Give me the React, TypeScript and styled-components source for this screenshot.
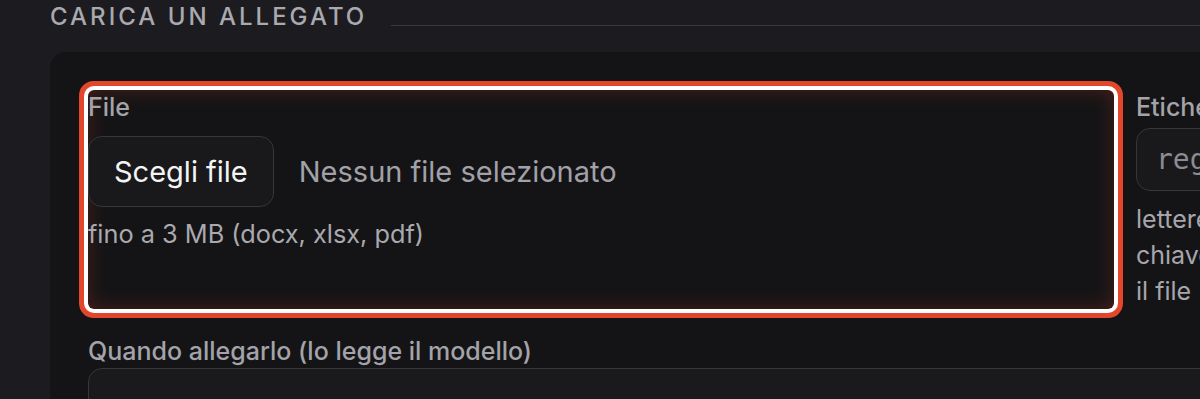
import React from "react";
import styled, { createGlobalStyle } from "styled-components";

const GlobalStyle = createGlobalStyle`
  html, body {
    margin: 0;
    padding: 0;
    background: #1c1c20;
    overflow: hidden;
  }
  body {
    font-family: Inter, "Noto Sans", sans-serif;
    color: #a6a6ac;
  }
`;

const Page = styled.div`
  width: 1200px;
  height: 399px;
  overflow: hidden;
  padding: 2px 0 0 50px;
  box-sizing: border-box;
`;

const SectionHeader = styled.div`
  display: flex;
  align-items: flex-start;
  height: 30px;
  width: 1600px;
`;

const Title = styled.h2`
  margin: 0;
  font-size: 24px;
  line-height: 30px;
  font-weight: 500;
  letter-spacing: 3px;
  color: #a9a9af;
  text-transform: uppercase;
  white-space: nowrap;
`;

const Rule = styled.div`
  flex: 1;
  height: 1px;
  margin: 23px 0 0 24px;
  background: #38383d;
`;

const Card = styled.section`
  margin-top: 20px;
  width: 1600px;
  background: #141416;
  border-radius: 16px;
  padding: 38px 0 40px 38px;
  box-sizing: border-box;
  display: flex;
  flex-direction: column;
  gap: 25px;
`;

const Grid = styled.div`
  display: grid;
  grid-template-columns: 1026px 460px;
  column-gap: 22px;
  align-items: stretch;
`;

const Field = styled.div<{ $highlight?: boolean }>`
  display: flex;
  flex-direction: column;
  border-radius: 6px;
  ${(p) =>
    p.$highlight &&
    `
    box-shadow: 0 0 0 4px #ffffff, 0 0 0 9px #e2462b, inset 0 0 20px rgba(200, 60, 40, 0.3);
  `}
`;

const Label = styled.label`
  font-size: 25px;
  line-height: 34px;
  font-weight: 500;
  color: #a3a3a9;
  white-space: nowrap;
`;

const FileRow = styled.div`
  display: flex;
  align-items: center;
  gap: 25px;
  margin-top: 12px;
`;

const FileButton = styled.button`
  height: 71px;
  padding: 0 25px;
  border: 1px solid #36363b;
  border-radius: 14px;
  background: #19191c;
  color: #f4f4f5;
  font-family: Inter, sans-serif;
  font-size: 29px;
  font-weight: 400;
`;

const FileName = styled.span`
  font-size: 29px;
  color: #a1a1a7;
`;

const Hint = styled.div`
  margin-top: 9px;
  font-size: 25.3px;
  line-height: 36px;
  color: #a9a9ae;
`;

const TextInput = styled.div`
  margin-top: 4px;
  height: 63px;
  box-sizing: border-box;
  border: 1px solid #36363b;
  border-radius: 14px;
  background: #19191c;
  padding: 0 19px;
  display: flex;
  align-items: center;
  font-family: "DejaVu Sans Mono", "Liberation Mono", monospace;
  font-size: 28px;
  color: #8c8c92;
  white-space: nowrap;
`;

const Help = styled.div`
  margin-top: 10px;
  font-size: 25px;
  line-height: 36px;
  color: #a6a6ac;
  white-space: nowrap;
`;

const TextArea = styled.div`
  height: 90px;
  border: 1px solid #36363b;
  border-radius: 14px;
  background: #1a1a1d;
`;

export default function App() {
  return (
    <>
      <GlobalStyle />
      <Page>
        <SectionHeader>
          <Title>Carica un allegato</Title>
          <Rule />
        </SectionHeader>
        <Card>
          <Grid>
            <Field $highlight>
              <Label>File</Label>
              <FileRow>
                <FileButton>Scegli file</FileButton>
                <FileName>Nessun file selezionato</FileName>
              </FileRow>
              <Hint>fino a 3 MB (docx, xlsx, pdf)</Hint>
            </Field>
            <Field>
              <Label>Etichetta</Label>
              <TextInput>regolamento</TextInput>
              <Help>
                lettere minuscole, numeri e trattini: è la
                <br />
                chiave con cui il modello ritrova
                <br />
                il file
              </Help>
            </Field>
          </Grid>
          <Field>
            <Label>Quando allegarlo (lo legge il modello)</Label>
            <TextArea />
          </Field>
        </Card>
      </Page>
    </>
  );
}
